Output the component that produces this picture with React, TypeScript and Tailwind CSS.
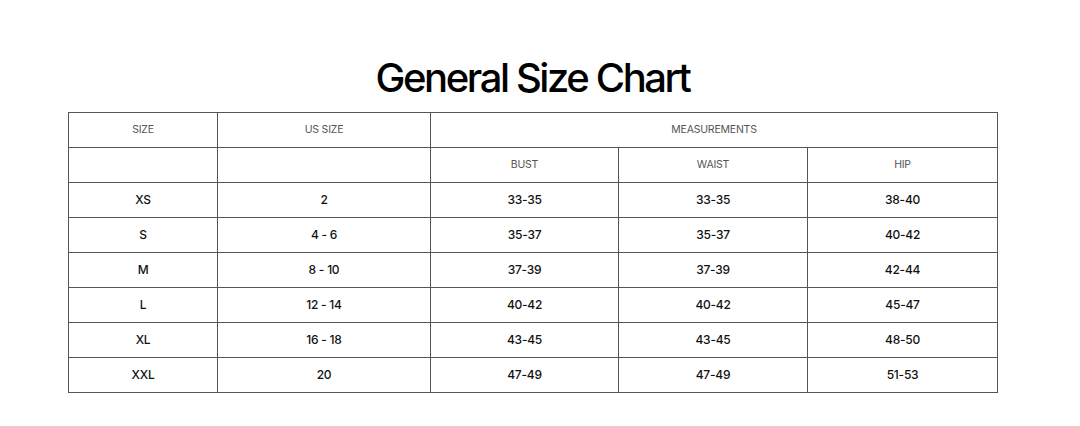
import React from "react";

interface SizeRow {
  size: string;
  us: string;
  bust: string;
  waist: string;
  hip: string;
}

const rows: SizeRow[] = [
  { size: "XS", us: "2", bust: "33-35", waist: "33-35", hip: "38-40" },
  { size: "S", us: "4 - 6", bust: "35-37", waist: "35-37", hip: "40-42" },
  { size: "M", us: "8 - 10", bust: "37-39", waist: "37-39", hip: "42-44" },
  { size: "L", us: "12 - 14", bust: "40-42", waist: "40-42", hip: "45-47" },
  { size: "XL", us: "16 - 18", bust: "43-45", waist: "43-45", hip: "48-50" },
  { size: "XXL", us: "20", bust: "47-49", waist: "47-49", hip: "51-53" },
];

const head = "border border-[#555] h-[35px] p-0 text-center align-middle text-[10.5px] font-normal tracking-[-0.02em] text-[#555]";
const cell = "border border-[#555] h-[35px] p-0 text-center align-middle text-[12px] font-medium tracking-[-0.02em] text-[#111]";

export default function App() {
  return (
    <div className="min-h-screen bg-white font-['Inter',sans-serif]">
      <div className="pl-[68px] pt-[54px]">
        <div className="w-[929px]">
          {/* TITLE */}
          <h1 className="text-center text-[40px] leading-[48px] font-medium tracking-[-0.06em] text-black">
            General Size Chart
          </h1>

          {/* TABLE */}
          <table className="mt-[10px] w-[929px] border-collapse table-fixed">
            <colgroup>
              <col className="w-[149px]" />
              <col className="w-[213px]" />
              <col className="w-[188px]" />
              <col className="w-[189px]" />
              <col className="w-[190px]" />
            </colgroup>
            <thead>
              <tr>
                <th className={head}>SIZE</th>
                <th className={head}>US SIZE</th>
                <th className={head} colSpan={3}>MEASUREMENTS</th>
              </tr>
              <tr>
                <th className={head}></th>
                <th className={head}></th>
                <th className={head}>BUST</th>
                <th className={head}>WAIST</th>
                <th className={head}>HIP</th>
              </tr>
            </thead>
            <tbody>
              {rows.map((r) => (
                <tr key={r.size}>
                  <td className={cell}>{r.size}</td>
                  <td className={cell}>{r.us}</td>
                  <td className={cell}>{r.bust}</td>
                  <td className={cell}>{r.waist}</td>
                  <td className={cell}>{r.hip}</td>
                </tr>
              ))}
            </tbody>
          </table>
        </div>
      </div>
    </div>
  );
}
